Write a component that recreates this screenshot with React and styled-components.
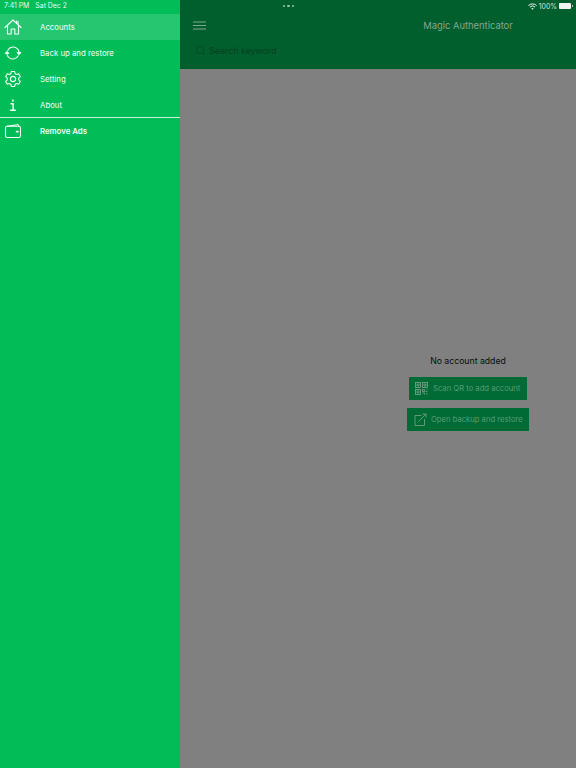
import styled, { createGlobalStyle } from "styled-components";
import { Search } from "lucide-react";

const Global = createGlobalStyle`
  html, body {
    margin: 0;
    padding: 0;
    background: #808080;
  }
  * {
    box-sizing: border-box;
  }
`;

const Page = styled.div`
  display: flex;
  width: 576px;
  height: 768px;
  overflow: hidden;
  font-family: Inter, "Liberation Sans", Arial, sans-serif;
`;

//#region Sidebar
const Sidebar = styled.aside`
  flex: 0 0 180px;
  background: #00bd58;
  color: #f2fff7;
`;

const StatusLeft = styled.div`
  display: flex;
  gap: 6px;
  height: 14px;
  padding: 0 0 0 4px;
  font-size: 6.9px;
  line-height: 11px;
  color: #e4fbee;
`;

const MenuRow = styled.div`
  display: flex;
  align-items: center;
  height: ${(p) => (p.$divider ? 27 : 26)}px;
  margin-top: ${(p) => (p.$divider ? -1 : 0)}px;
  background: ${(p) => (p.$active ? "#26c671" : "transparent")};
  border-top: ${(p) => (p.$divider ? "1px solid #c4f2d8" : "none")};
`;

const MenuIcon = styled.svg`
  flex: 0 0 18px;
  width: 18px;
  height: 18px;
  margin-left: 4px;
  fill: none;
  stroke: #f4fff9;
  stroke-width: 1.1;
  stroke-linecap: round;
  stroke-linejoin: round;
`;

const MenuLabel = styled.span`
  margin-left: 18px;
  font-size: 7.8px;
  font-weight: ${(p) => (p.$bold ? 600 : 400)};
  white-space: nowrap;
`;
//#endregion

//#region Main
const Main = styled.main`
  flex: 0 0 576px;
  display: flex;
  flex-direction: column;
  background: #808080;
`;

const Header = styled.header`
  height: 69px;
  background: #005f2d;
`;

const StatusRight = styled.div`
  display: flex;
  align-items: center;
  height: 12px;
  padding-right: 185px;
  font-size: 6.9px;
  color: #d4e4da;
`;

const Dots = styled.div`
  display: flex;
  gap: 2px;
  margin-left: 103px;
  margin-right: auto;
`;

const Dot = styled.i`
  width: 2.4px;
  height: 2.4px;
  border-radius: 50%;
  background: #8fc7a6;
`;

const Battery = styled.span`
  display: block;
  position: relative;
  width: 12px;
  height: 6px;
  margin-left: 2px;
  border-radius: 1px;
  background: #f2f6f3;

  &::after {
    content: "";
    position: absolute;
    right: -1.5px;
    top: 2px;
    width: 1px;
    height: 2px;
    background: #a9c4b4;
  }
`;

const WifiIcon = styled.svg`
  width: 9px;
  height: 7px;
  margin-right: 2px;
  fill: none;
  stroke: #f0f5f2;
  stroke-width: 1;
`;

const TitleRow = styled.div`
  display: flex;
  align-items: center;
  height: 27px;
  position: relative;
`;

const Burger = styled.svg`
  width: 13px;
  height: 9px;
  margin-left: 13px;
  stroke: #8fae9b;
  stroke-width: 0.9;
`;

const Title = styled.div`
  position: absolute;
  left: 0;
  right: 0;
  text-align: center;
  font-size: 9.4px;
  color: #86a694;
`;

const SearchRow = styled.div`
  display: flex;
  align-items: center;
  gap: 3px;
  height: 22px;
  padding-left: 15px;
  font-size: 8.9px;
  color: #074020;
`;

const Empty = styled.div`
  flex: 1;
  display: flex;
  flex-direction: column;
  align-items: center;
  padding-top: 286px;
`;

const EmptyText = styled.div`
  height: 22px;
  font-size: 8.7px;
  line-height: 12px;
  color: #0c0c0c;
`;

const ActionButton = styled.div`
  display: flex;
  align-items: center;
  gap: ${(p) => p.$gap}px;
  width: ${(p) => p.$width}px;
  height: 23px;
  margin-bottom: 8px;
  padding-left: ${(p) => p.$pad}px;
  background: #006b35;
  font-size: 7.65px;
  white-space: nowrap;
  color: #579c75;
`;

const ButtonIcon = styled.svg`
  flex: 0 0 13px;
  width: 13px;
  height: 13px;
  fill: none;
  stroke: #7ca58e;
  stroke-width: 0.8;
`;
//#endregion

const HomeGlyph = () => (
  <MenuIcon viewBox="0 0 18 18">
    <path d="M1 9.5 9 2l8 7.5" />
    <path d="M3.5 7.5V16h3.7v-5h3.6v5h3.7V7.5" />
    <path d="M12.5 3v2M14 3.2v3.4" />
  </MenuIcon>
);

const SyncGlyph = () => (
  <MenuIcon viewBox="0 0 18 18">
    <path d="M3.8 6.2A6 6 0 0 1 13.6 5c.9.9 1.3 2 1.4 3" />
    <path d="M14.2 11.8A6 6 0 0 1 4.4 13c-.9-.9-1.3-2-1.4-3" />
    <path d="M13.2 8.6h3.4L15 10.4z" fill="#f4fff9" />
    <path d="M1.4 9.4h3.4L3 7.6z" fill="#f4fff9" />
  </MenuIcon>
);

const GearGlyph = () => (
  <MenuIcon viewBox="0 0 18 18">
    <circle cx="9" cy="9" r="2.6" />
    <path d="M7.3 1.5h3.4l.5 2.3 1.3.7 2.2-.8 1.7 3-1.7 1.5v1.6l1.7 1.5-1.7 3-2.2-.8-1.3.7-.5 2.3H7.3l-.5-2.3-1.3-.7-2.2.8-1.7-3 1.7-1.5V8.2L1.6 6.7l1.7-3 2.2.8 1.3-.7z" />
  </MenuIcon>
);

const InfoGlyph = () => (
  <MenuIcon viewBox="0 0 18 18" style={{ strokeWidth: 1.4 }}>
    <path d="M8.9 4v1.2" />
    <path d="M7 7.8h2.1v6.4M6.6 14.2h4.8" />
  </MenuIcon>
);

const WalletGlyph = () => (
  <MenuIcon viewBox="0 0 18 18">
    <path d="M3 4.4 13 2.7c1-.2 1.6.3 1.7 1.5" />
    <rect x="1.5" y="4.2" width="15" height="11.3" rx="1.8" />
    <path d="M12.6 9.6h1.4" strokeWidth="1.8" />
  </MenuIcon>
);

const QrGlyph = () => (
  <ButtonIcon viewBox="0 0 13 13">
    <rect x="0.5" y="0.5" width="5" height="5" />
    <rect x="7.5" y="0.5" width="5" height="5" />
    <rect x="0.5" y="7.5" width="5" height="5" />
    <path d="M2 2h2v2H2zM9 2h2v2H9zM2 9h2v2H2z" />
    <path d="M7.5 7.5h2v2h-2zM10.5 9.5h2M7.5 11h2v1.5M11 11l1.5 1.5M11.5 7.5h1" />
  </ButtonIcon>
);

const ShareGlyph = () => (
  <ButtonIcon viewBox="0 0 13 13">
    <path d="M7.5 2.5H1v10h9.5V6" />
    <path d="M4.5 8.5 12 1M8.5 1H12v3.5" />
  </ButtonIcon>
);

const menu = [
  { label: "Accounts", Glyph: HomeGlyph, active: true },
  { label: "Back up and restore", Glyph: SyncGlyph },
  { label: "Setting", Glyph: GearGlyph },
  { label: "About", Glyph: InfoGlyph },
  { label: "Remove Ads", Glyph: WalletGlyph, bold: true, divider: true },
];

export default function App() {
  return (
    <Page>
      <Global />
      <Sidebar>
        <StatusLeft>
          <span>7:41 PM</span>
          <span>Sat Dec 2</span>
        </StatusLeft>
        {menu.map(({ label, Glyph, active, bold, divider }) => (
          <MenuRow key={label} $active={active} $divider={divider}>
            <Glyph />
            <MenuLabel $bold={bold}>{label}</MenuLabel>
          </MenuRow>
        ))}
      </Sidebar>
      <Main>
        <Header>
          <StatusRight>
            <Dots>
              <Dot />
              <Dot />
              <Dot />
            </Dots>
            <WifiIcon viewBox="0 0 9 7">
              <path d="M.4 2.6a5.8 5.8 0 0 1 8.2 0M1.9 4.1a3.7 3.7 0 0 1 5.2 0" />
              <path d="M3.3 5.5a1.7 1.7 0 0 1 2.4 0L4.5 6.8z" fill="#f0f5f2" stroke="none" />
            </WifiIcon>
            <span>100%</span>
            <Battery />
          </StatusRight>
          <TitleRow>
            <Burger viewBox="0 0 13 9">
              <path d="M0 1h13M0 4.5h13M0 8h13" />
            </Burger>
            <Title>Magic Authenticator</Title>
          </TitleRow>
          <SearchRow>
            <Search size={11} strokeWidth={1.4} color="#074020" />
            Search keyword
          </SearchRow>
        </Header>
        <Empty>
          <EmptyText>No account added</EmptyText>
          <ActionButton $width={118} $pad={6} $gap={5}>
            <QrGlyph />
            Scan QR to add account
          </ActionButton>
          <ActionButton $width={122} $pad={7} $gap={4}>
            <ShareGlyph />
            Open backup and restore
          </ActionButton>
        </Empty>
      </Main>
    </Page>
  );
}
